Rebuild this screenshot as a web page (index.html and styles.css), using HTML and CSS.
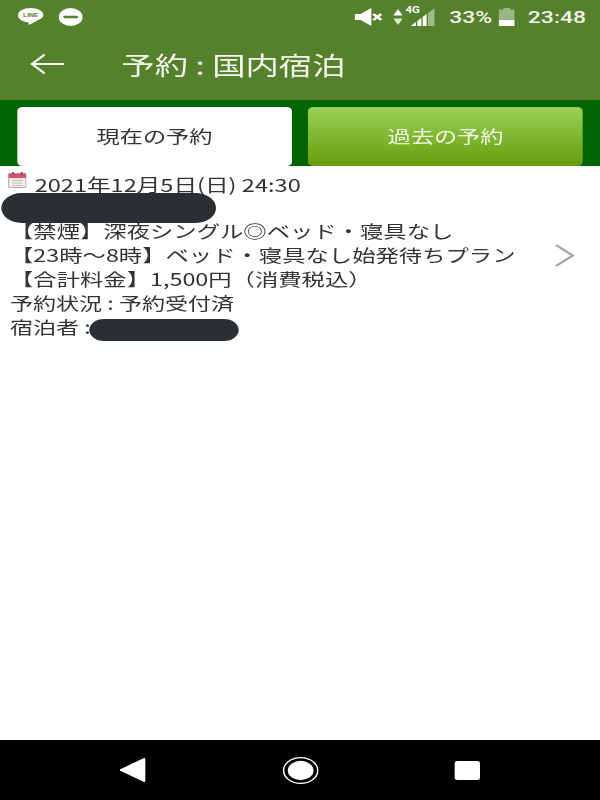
FILE: index.html
```html
<!DOCTYPE html>
<html lang="ja">
<head>
<meta charset="utf-8">
<title>予約 : 国内宿泊</title>
<link rel="stylesheet" href="styles.css">
</head>
<body>
<div class="screen">
  <header class="appbar">
    <div class="status">
      <div class="status-left">
        <svg class="ic-line" viewBox="0 0 20 20"><path d="M10 1C4.600 1 .5 3.900.5 8.200c0 4 3.400 6.600 7.600 7.100.5.1.4.6.3 1.200-.1.6-.3 1.400.5 1.100 1.300-.6 4.800-2.900 6.500-4.700C17.900 11.600 19.500 10.300 19.500 8.200 19.500 3.900 15.400 1 10 1z" fill="#fff"/><text x="10" y="10.300" class="line-txt" text-anchor="middle">LINE</text></svg>
        <svg class="ic-dnd" viewBox="0 0 18 18"><circle cx="9" cy="9" r="9" fill="#fff"/><rect x="3.500" y="7.800" width="11" height="2.400" rx="1" fill="#55802c"/></svg>
      </div>
      <div class="status-right">
        <svg class="ic-mute" viewBox="0 0 21 18"><path d="M0 6h4.500L12.500 0v18L4.500 12H0z" fill="#fff"/><path d="M14 6l6 6M20 6l-6 6" stroke="#fff" stroke-width="2.200" fill="none"/></svg>
        <svg class="ic-updown" viewBox="0 0 7 16"><path d="M3.500 0L7 6.500H0z" fill="#fff"/><path d="M3.500 16L0 9.500H7z" fill="#dfe8d4"/></svg>
        <span class="signal">
          <span class="net">4G</span>
          <svg class="ic-signal" viewBox="0 0 18 18"><path d="M0 18L4 14V18z" fill="#fff"/><path d="M5 13L8 10V18H5z" fill="#fff"/><path d="M9 9L12 6V18H9z" fill="#fff"/><path d="M13 5L18 0V18H13z" fill="#fff" opacity=".45"/></svg>
        </span>
        <span class="pct">33%</span>
        <svg class="ic-batt" viewBox="0 0 12 18"><path d="M3.500 0h5v1.500H12V12H0V1.500h3.500z" fill="#fff" opacity=".42"/><rect y="12" width="12" height="6" fill="#fff"/></svg>
        <span class="clock">23:48</span>
      </div>
    </div>
    <div class="titlebar">
      <svg class="ic-back" viewBox="0 0 26 24"><path d="M26 12H2M11.500 2.500L2 12l9.500 9.500" fill="none" stroke="#f4f7ee" stroke-width="2"/></svg>
      <h1 class="title">予約 : 国内宿泊</h1>
    </div>
  </header>

  <nav class="tabs">
    <div class="tab tab-on">現在の予約</div>
    <div class="tab tab-off">過去の予約</div>
  </nav>

  <main class="content">
    <div class="date-row">
      <svg class="ic-cal" viewBox="0 0 14 16"><rect x=".500" y="1.500" width="13" height="14" rx="1" fill="#f6eeee" stroke="#b9a9a9" stroke-width=".8"/><rect x=".500" y="1.500" width="13" height="4.500" fill="#d9546a"/><rect x="3" y="0" width="1.500" height="3" fill="#8c5660"/><rect x="9.500" y="0" width="1.500" height="3" fill="#8c5660"/><path d="M3 8.500h8M3 11h8M3 13.500h8" stroke="#cbb7b7" stroke-width="1"/></svg>
      <span>2021年12月5日(日) 24:30</span>
    </div>
    <div class="hotel-row"><span class="mask mask-hotel"></span></div>
    <div class="plan">
      <div class="plan-text">
        <div>【禁煙】深夜シングル◎ベッド・寝具なし</div>
        <div>【23時～8時】ベッド・寝具なし始発待ちプラン</div>
        <div>【合計料金】1,500円（消費税込）</div>
      </div>
      <svg class="ic-chev" viewBox="0 0 15 23"><path d="M1 1l12.500 10.500L1 22" fill="none" stroke="#a3a3a3" stroke-width="2"/></svg>
    </div>
    <div>予約状況 : 予約受付済</div>
    <div class="guest">宿泊者 : <span class="mask mask-guest"></span></div>
  </main>

  <footer class="navbar">
    <svg class="ic-nav-back" viewBox="0 0 20 24"><path d="M19 1v22a1 1 0 0 1-1.400.800L.600 13a1 1 0 0 1 0-2L17.600.200A1 1 0 0 1 19 1z" fill="#fff"/></svg>
    <svg class="ic-nav-home" viewBox="0 0 28 28"><circle cx="14" cy="14" r="13.300" fill="none" stroke="#fff" stroke-width="1.200"/><circle cx="14" cy="14" r="10" fill="#fff"/></svg>
    <span class="nav-square"></span>
  </footer>
</div>
</body>
</html>
```
FILE: styles.css
```css
html, body {
  margin: 0;
  padding: 0;
  width: 600px;
  height: 800px;
  overflow: hidden;
  background: #fff;
}

/* The reference is a 450-wide phone capture stretched to 600 wide. */
.screen {
  width: 450px;
  height: 800px;
  display: flex;
  flex-direction: column;
  transform: scaleX(1.3333);
  transform-origin: 0 0;
  font-family: "Noto Sans CJK JP", "Noto Sans", sans-serif;
  color: #333;
}

.appbar {
  height: 100px;
  background: #55802c;
  flex: none;
}

.status {
  height: 33px;
  display: flex;
  justify-content: space-between;
  align-items: center;
  padding: 0 10.5px 0 12.75px;
  color: #f2f6ec;
}

.status-left, .status-right {
  display: flex;
  align-items: center;
}

.ic-line { width: 20px; height: 20px; display: block; }
.line-txt { font: 700 5px "Liberation Sans", sans-serif; fill: #55802c; }
.ic-dnd { width: 18px; height: 18px; margin-left: 11px; display: block; }

.ic-mute { width: 21px; height: 18px; display: block; }
.ic-updown { width: 7px; height: 16px; margin-left: 8px; display: block; }

.signal {
  position: relative;
  width: 22px;
  height: 18px;
  margin-left: 2px;
  display: flex;
  justify-content: flex-end;
}
.ic-signal { width: 18px; height: 18px; display: block; }
.net {
  position: absolute;
  left: 0;
  top: -3px;
  font: 700 8.500px/10px "Roboto", sans-serif;
  color: #fff;
}

.pct, .clock {
  font: 500 17.200px/20px "Roboto", sans-serif;
}
.pct { margin-left: 10.750px; }
.ic-batt { width: 12px; height: 18px; margin-left: 5.250px; display: block; }
.clock { margin-left: 9.500px; }

.titlebar {
  height: 67px;
  display: flex;
  align-items: center;
  padding-left: 21.5px;
  padding-bottom: 6px;
  box-sizing: border-box;
}
.ic-back { width: 26px; height: 24px; display: block; }
.title {
  margin: 0 0 0 43.500px;
  font-size: 25px;
  line-height: 32px;
  font-weight: 400;
  color: #f4f7ee;
}

.tabs {
  height: 66px;
  box-sizing: border-box;
  flex: none;
  background: #006400;
  padding: 7px 12.75px 0;
  display: flex;
  gap: 12px;
}
.tab {
  flex: 1;
  border-radius: 4px;
  display: flex;
  align-items: center;
  justify-content: center;
  font-size: 17.400px;
  padding-bottom: 2px;
}
.tab-on { background: #fff; color: #333; }
.tab-off {
  background: linear-gradient(#98d154, #689c0e);
  color: #f2f7e6;
}

.content {
  flex: 1;
  padding: 6px 7.5px 0;
  font-size: 17.300px;
  line-height: 24px;
}

.date-row {
  display: flex;
  align-items: flex-start;
  height: 23px;
  font-size: 17.700px;
}
.ic-cal {
  width: 14px;
  height: 16px;
  margin: 0 5px 0 -1.5px;
  display: block;
  flex: none;
}
.date-row span { margin-left: 1px; }

.hotel-row {
  position: relative;
  height: 24px;
}
.mask {
  position: absolute;
  background: #2a2f33;
}
.mask-hotel {
  left: -6.750px;
  top: -2px;
  width: 161px;
  height: 30px;
  border-radius: 15px;
}

.plan {
  display: flex;
  justify-content: space-between;
  align-items: center;
  padding-right: 11.500px;
}
.plan-text { font-size: 17.500px; }
.ic-chev { width: 15px; height: 23px; display: block; flex: none; }

.guest { position: relative; }
.mask-guest {
  left: 59.250px;
  top: 4px;
  width: 112px;
  height: 22px;
  border-radius: 11px;
}

.navbar {
  height: 60px;
  flex: none;
  background: #000;
  display: flex;
  align-items: center;
  padding-left: 90px;
  box-sizing: border-box;
}
.ic-nav-back { width: 20px; height: 24px; display: block; }
.ic-nav-home { width: 27px; height: 27px; margin-left: 101.500px; display: block; }
.nav-square {
  width: 19px;
  height: 19px;
  margin-left: 102px;
  background: #fff;
  border-radius: 2px;
}
```
